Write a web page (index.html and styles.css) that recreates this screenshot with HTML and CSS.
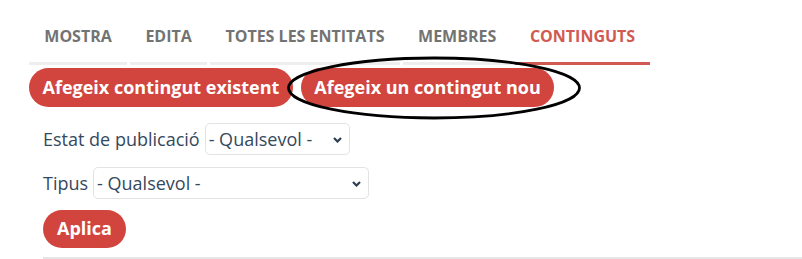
FILE: index.html
```html
<!DOCTYPE html>
<html lang="ca">
<head>
<meta charset="utf-8">
<title>Continguts</title>
<link rel="stylesheet" href="styles.css">
</head>
<body>
<div class="page">
  <ul class="tabs">
    <li class="tab"><a href="#">MOSTRA</a></li>
    <li class="tab"><a href="#">EDITA</a></li>
    <li class="tab"><a href="#">TOTES LES ENTITATS</a></li>
    <li class="tab"><a href="#">MEMBRES</a></li>
    <li class="tab active"><a href="#">CONTINGUTS</a></li>
  </ul>
  <div class="actions">
    <a class="btn" href="#">Afegeix contingut existent</a>
    <a class="btn" href="#">Afegeix un contingut nou</a>
    <svg class="circle" width="296" height="66" viewBox="0 0 296 66" aria-hidden="true">
      <ellipse cx="148" cy="33" rx="145.5" ry="30" fill="none" stroke="#000" stroke-width="2.8"/>
    </svg>
  </div>
  <form class="filters">
    <div class="row">
      <label class="label">Estat de publicació</label>
      <div class="select-wrap w1">
        <select class="select"><option>- Qualsevol -</option></select>
        <svg class="chev" width="9" height="6" viewBox="0 0 9 6"><path d="M1 1 L4.5 4.5 L8 1" fill="none" stroke="#2c3e50" stroke-width="2.2"/></svg>
      </div>
    </div>
    <div class="row">
      <label class="label">Tipus</label>
      <div class="select-wrap w2">
        <select class="select"><option>- Qualsevol -</option></select>
        <svg class="chev" width="9" height="6" viewBox="0 0 9 6"><path d="M1 1 L4.5 4.5 L8 1" fill="none" stroke="#2c3e50" stroke-width="2.2"/></svg>
      </div>
    </div>
    <div class="row">
      <button class="btn apply" type="button">Aplica</button>
    </div>
  </form>
  <div class="rule"></div>
</div>
</body>
</html>
```

FILE: styles.css
```css
html, body {
  margin: 0;
  padding: 0;
  background: #fff;
}
body {
  font-family: "Open Sans", "Liberation Sans", sans-serif;
}
.page {
  padding-top: 16px;
}
.tabs {
  list-style: none;
  margin: 0 0 0 29px;
  padding: 0;
  display: flex;
  gap: 3px;
}
.tab {
  border-bottom: 3px solid #eeeeee;
}
.tab a {
  display: block;
  padding: 10px 15.3px 16px;
  font-size: 16px;
  line-height: 20px;
  font-weight: 700;
  color: #737373;
  text-decoration: none;
}
.tab.active {
  border-bottom-color: #d05a52;
}
.tab.active a {
  color: #d05a52;
}
.actions {
  position: relative;
  margin: 3px 0 0 29px;
  display: flex;
  gap: 8px;
}
.btn {
  display: inline-block;
  background: #d1453e;
  color: #fff;
  font-family: "Open Sans", "Liberation Sans", sans-serif;
  font-weight: 700;
  font-size: 18px;
  line-height: 23px;
  padding: 8px 13.5px;
  border-radius: 20px;
  border: 0;
  text-decoration: none;
  white-space: nowrap;
}
.circle {
  position: absolute;
  left: 257px;
  top: -13px;
}
.filters {
  margin: 16px 0 0 43px;
  display: flex;
  flex-direction: column;
  gap: 12px;
}
.row {
  display: flex;
  align-items: center;
  gap: 5px;
}
.label {
  font-size: 18px;
  color: #34495e;
}
.select-wrap {
  position: relative;
  height: 32px;
}
.w1 { width: 145px; }
.w2 { width: 276px; }
.select {
  appearance: none;
  -webkit-appearance: none;
  width: 100%;
  height: 32px;
  box-sizing: border-box;
  border: 1px solid #e3e3e3;
  border-radius: 5px;
  background: #fff;
  padding: 0 3px;
  font-family: "Open Sans", "Liberation Sans", sans-serif;
  font-size: 18px;
  color: #34495e;
}
.chev {
  position: absolute;
  right: 8px;
  top: 14px;
  pointer-events: none;
}
.apply {
  margin-top: -1px;
  padding: 7px 14px 8px;
}
.rule {
  margin: 9px 0 0 43px;
  height: 2px;
  background: #e6e6e6;
}
```
